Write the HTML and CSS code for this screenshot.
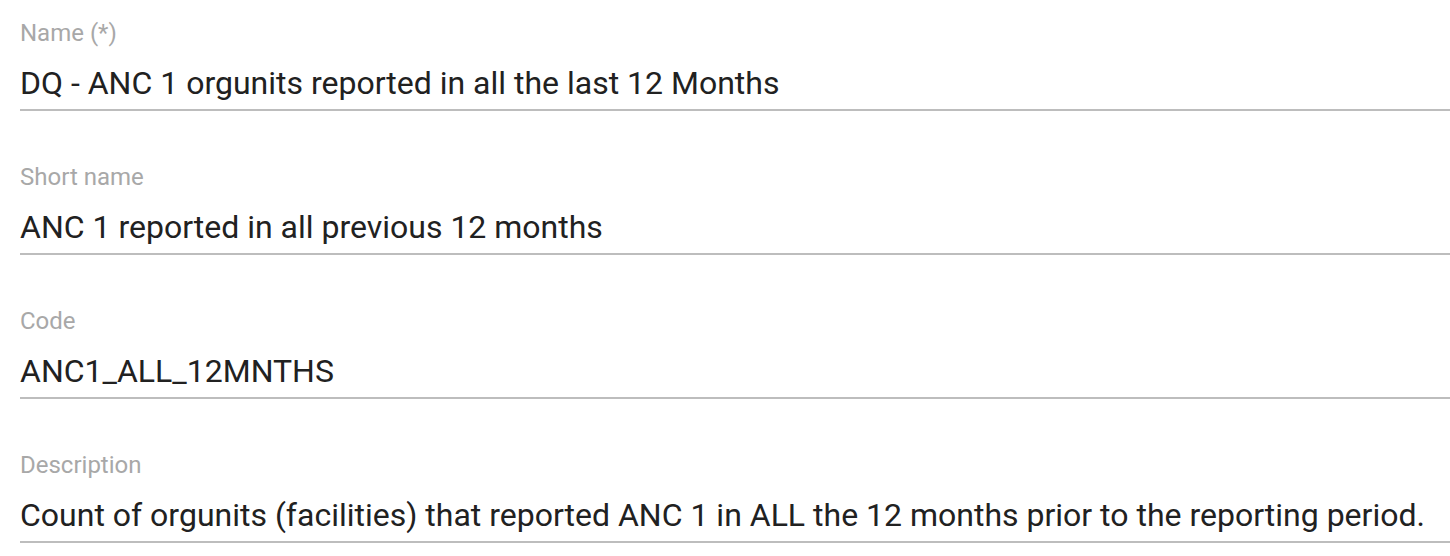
FILE: index.html
```html
<!DOCTYPE html>
<html>
<head>
<meta charset="utf-8">
<link rel="stylesheet" href="styles.css">
</head>
<body>
<div class="form">
  <div class="field">
    <div class="label">Name (*)</div>
    <div class="value">DQ - ANC 1 orgunits reported in all the last 12 Months</div>
  </div>
  <div class="field">
    <div class="label">Short name</div>
    <div class="value">ANC 1 reported in all previous 12 months</div>
  </div>
  <div class="field">
    <div class="label">Code</div>
    <div class="value">ANC1_ALL_12MNTHS</div>
  </div>
  <div class="field">
    <div class="label">Description</div>
    <div class="value">Count of orgunits (facilities) that reported ANC 1 in ALL the 12 months prior to the reporting period.</div>
  </div>
</div>
</body>
</html>
```
FILE: styles.css
```css
html, body {
  margin: 0;
  padding: 0;
  background: #ffffff;
}
body {
  font-family: Roboto, "Noto Sans", sans-serif;
}
.form {
  display: flex;
  flex-direction: column;
  padding: 0 0 0 20px;
}
.field {
  height: 144px;
  display: flex;
  flex-direction: column;
  box-sizing: border-box;
  padding-top: 21px;
}
.label {
  font-size: 24px;
  line-height: 24px;
  color: #a8a8a8;
}
.value {
  font-size: 32px;
  line-height: 40px;
  color: #212121;
  margin-top: 18px;
  padding-bottom: 6px;
  border-bottom: 2px solid #bdbdbd;
  white-space: nowrap;
}
```
